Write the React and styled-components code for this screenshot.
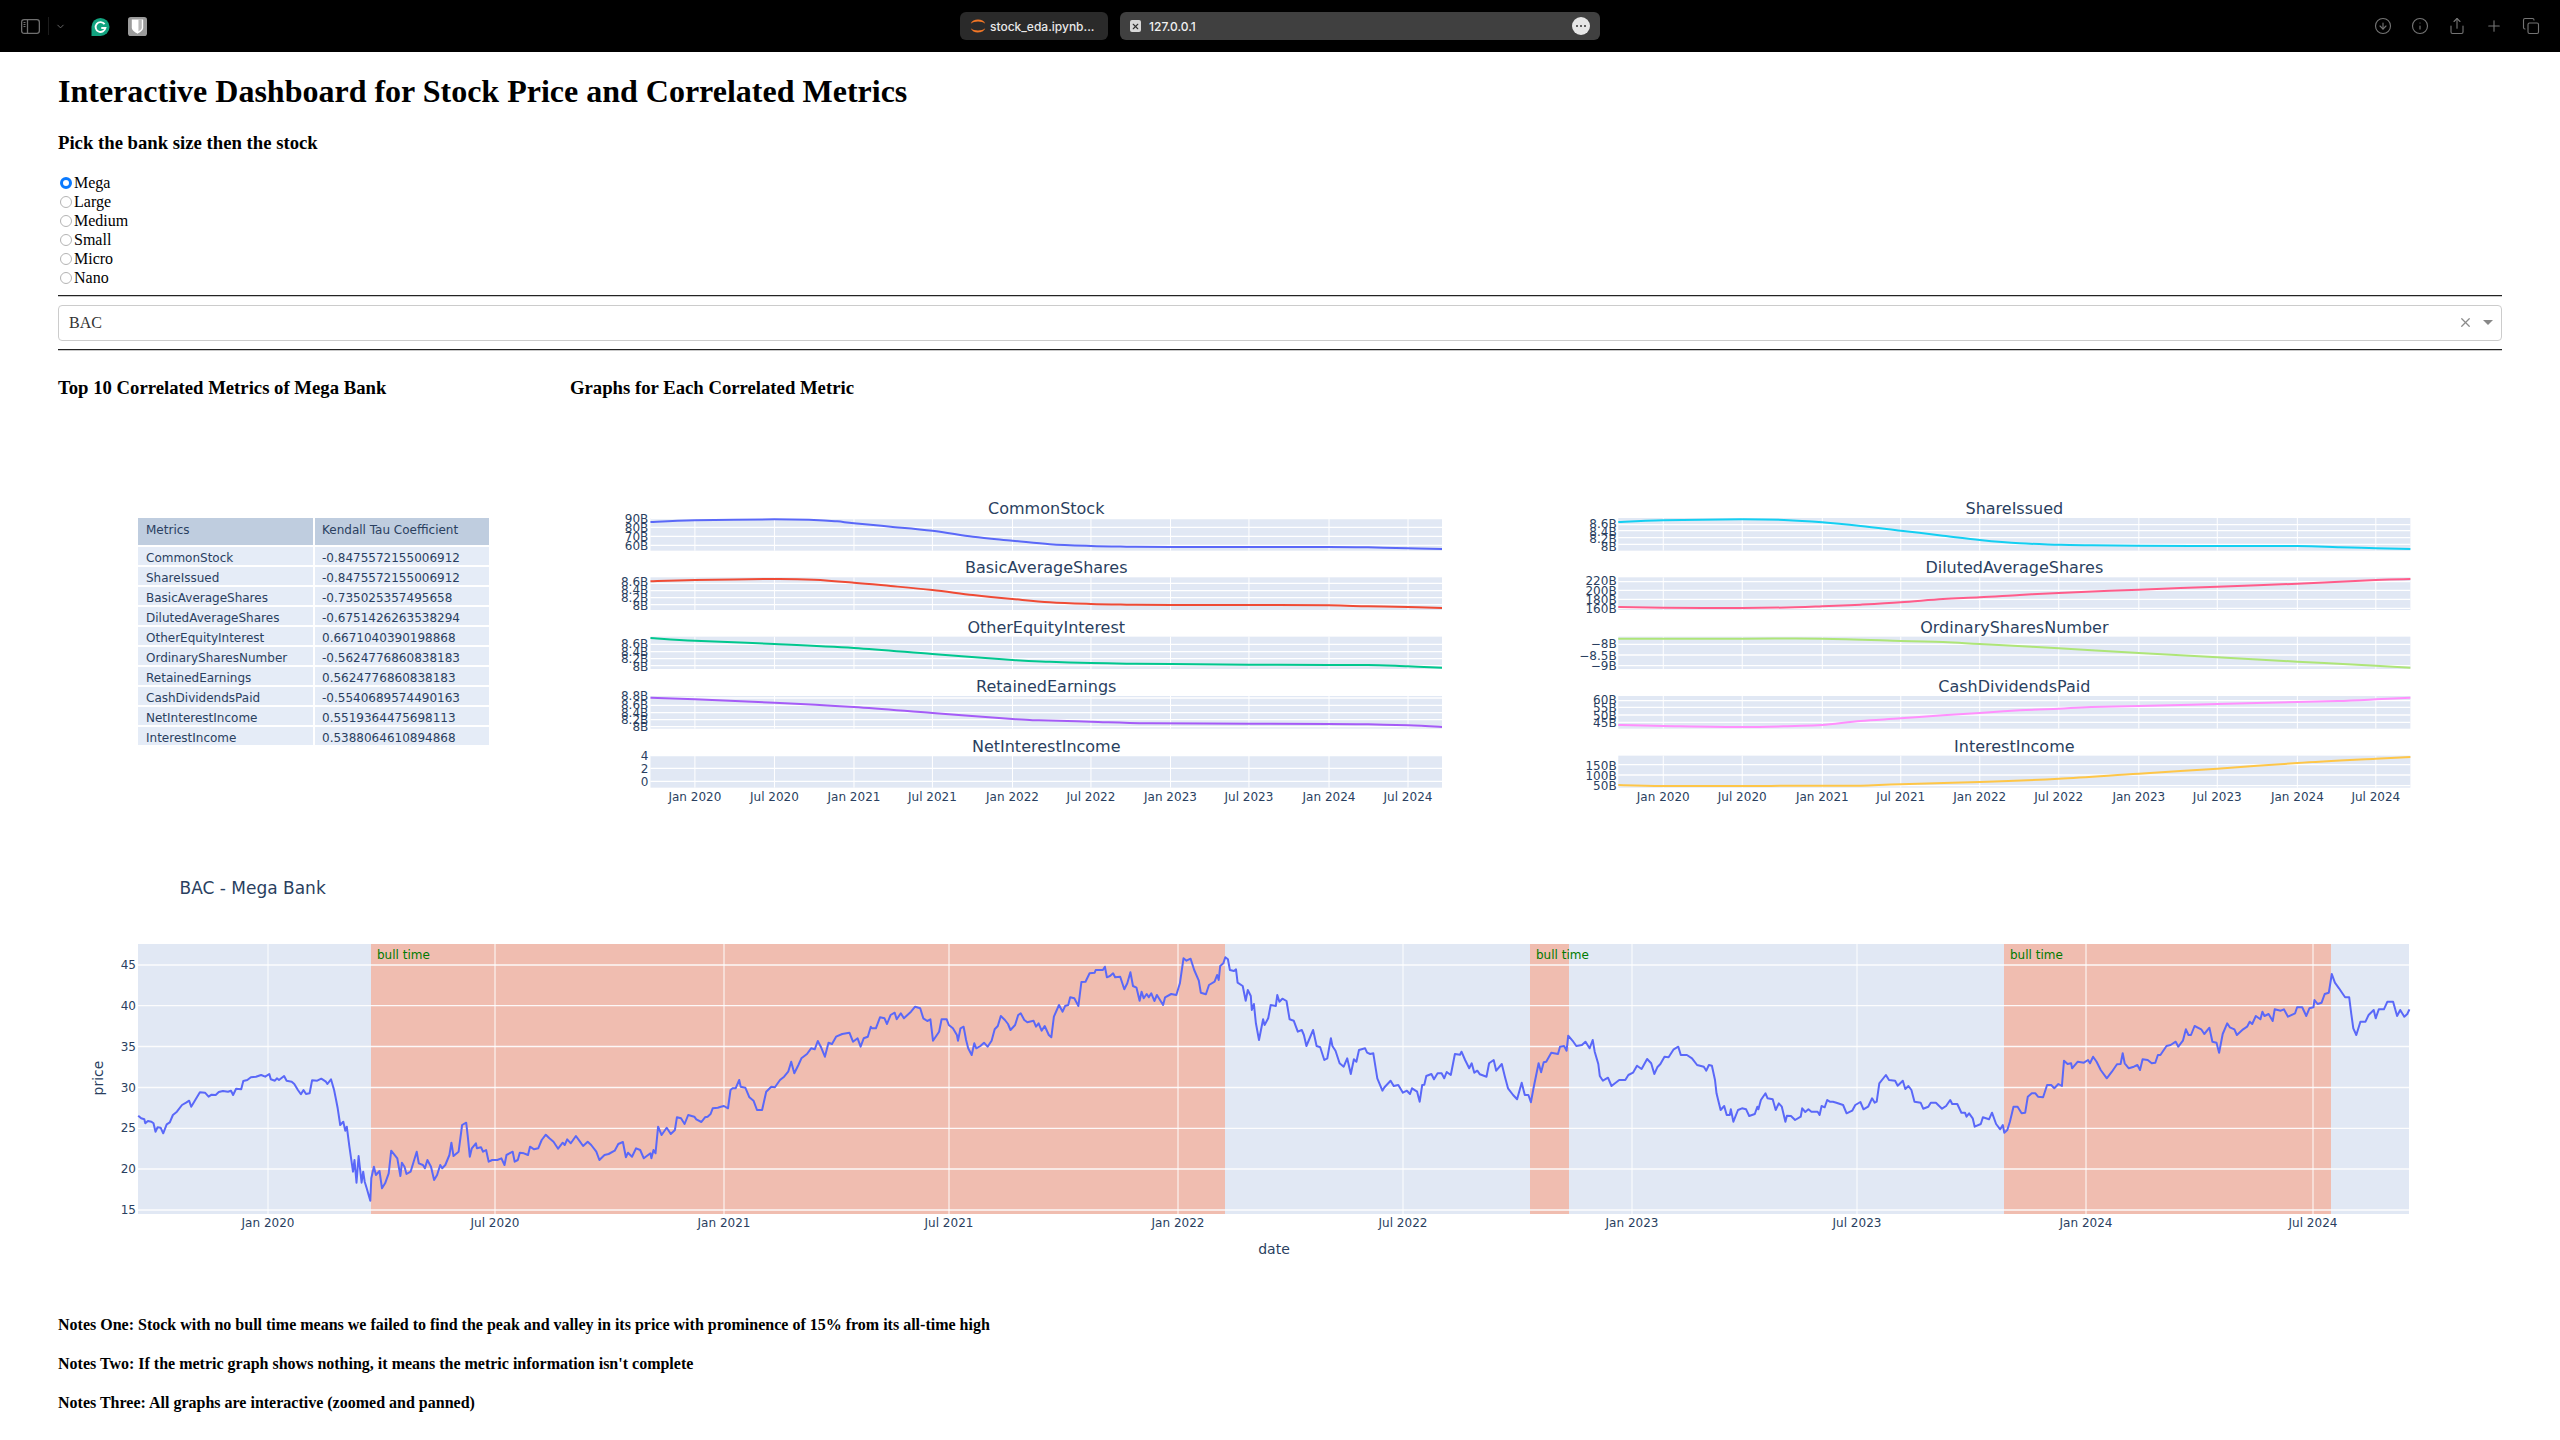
import React from "react";
import styled, { createGlobalStyle } from "styled-components";
import { ChevronDown, CircleArrowDown, Info, Share, Plus, Copy, X } from "lucide-react";

const Global = createGlobalStyle`
  html, body { margin: 0; padding: 0; background: #fff; }
  body { font-family: "Liberation Serif", "Times New Roman", serif; color: #000; overflow: hidden; }
`;

const TopBar = styled.header`
  height: 52px; background: #000; display: flex; align-items: center; box-sizing: border-box;
`;
const LeftTools = styled.div`
  width: 960px; flex: none; display: flex; align-items: center; padding-left: 21px; box-sizing: border-box; color: #6f6f6f;
`;
const ToolDivider = styled.span`
  width: 1px; height: 18px; background: #1c1c1c; margin: 0 6px 0 8px;
`;
const ExtensionIcon = styled.svg`
  width: 19px; height: 19px; flex: none; margin-left: ${p => p.$gap}px;
`;
const TabChip = styled.div`
  width: 148px; height: 28px; flex: none; border-radius: 6px; background: #2a2a2a; color: #e8e8e8;
  display: flex; align-items: center; gap: 3px; padding-left: 9px; box-sizing: border-box;
  font: 500 12px "Inter", "Liberation Sans", sans-serif; white-space: nowrap;
`;
const UrlBar = styled.div`
  width: 480px; height: 28px; flex: none; margin-left: 12px; border-radius: 6px; background: #404040; color: #f0f0f0;
  display: flex; align-items: center; gap: 8px; padding: 0 10px 0 10px; box-sizing: border-box;
  font: 500 12px "Inter", "Liberation Sans", sans-serif;
`;
const UrlText = styled.span` flex: 1; `;
const FavX = styled.span`
  width: 11px; height: 12px; border-radius: 2px; background: #d8d8d8; color: #333; display: flex; align-items: center; justify-content: center;
`;
const MoreDots = styled.span`
  width: 18px; height: 18px; border-radius: 50%; background: #e6e6e6; display: flex; align-items: center; justify-content: center; gap: 1.5px;
`;
const Dot = styled.i` width: 2.5px; height: 2.5px; border-radius: 50%; background: #333; `;
const RightTools = styled.div`
  margin-left: auto; padding-right: 20px; display: flex; align-items: center; gap: 19px; color: #747474;
`;

const Page = styled.main` padding: 0 58px; `;
const Title = styled.h1` font-size: 32px; line-height: 37px; font-weight: 700; margin: 21px 0 22px; `;
const Heading = styled.h3` font-size: 18.72px; line-height: 21px; font-weight: 700; margin: ${p => p.$m || "0"}; `;
const RadioGroup = styled.div` margin-top: 19.5px; `;
const RadioRow = styled.label` display: flex; align-items: center; height: 19px; font-size: 16px; line-height: 19px; `;
const Radio = styled.input`
  appearance: none; box-sizing: border-box; margin: 1px 2px 0 2px; width: 12px; height: 12px; border-radius: 50%;
  border: 1px solid #b4b4b4; background: #fff;
  &:checked { border: 3.5px solid #0a7aff; }
`;
const Rule = styled.hr` margin: 8px 0; border: 0; border-top: 1px solid #222; border-bottom: 1px solid #c9c9c9; height: 0; `;
const Select = styled.div`
  height: 36px; box-sizing: border-box; border: 1px solid #ccc; border-radius: 4px; display: flex; align-items: center;
  padding: 0 8px 0 10px; font-size: 16px; color: #333;
`;
const SelectValue = styled.span` flex: 1; `;
const Clear = styled.span` color: #8a8a8a; display: flex; margin-right: 10px; `;
const Caret = styled.span` width: 0; height: 0; border: 5px solid transparent; border-top-color: #888; border-bottom: 0; `;

const Columns = styled.section` display: grid; grid-template-columns: 512px 1fr; margin-top: 26.5px; `;
const TableWrap = styled.div` margin: 119.5px 0 0 80px; width: 351px; `;
const TRow = styled.div`
  display: grid; grid-template-columns: 175px 174px; column-gap: 2px;
  height: ${p => p.$head ? 27 : 18}px; margin-bottom: 2px; overflow: visible;
  &:last-child { margin-bottom: 0; }
`;
const TCell = styled.div`
  background: ${p => p.$head ? "#BFCDDF" : "#E5ECF7"}; color: #2a3f5f; padding-left: 8px;
  font: 12px/${p => p.$head ? 25 : 23}px "DejaVu Sans", Verdana, sans-serif; white-space: nowrap; overflow: hidden;
  &:nth-child(2) { padding-left: 7px; }
`;
const ChartRow = styled.div` display: flex; margin-top: 19.5px; `;
const ChartSvg = styled.svg` display: block; width: ${p => p.$w}px; height: ${p => p.$h}px; flex: none; `;
const Label = styled.text`
  font-family: "DejaVu Sans", Verdana, sans-serif; font-size: ${p => p.$s || 12}px; fill: ${p => p.$c || "#2a3f5f"};
  text-anchor: ${p => p.$a || "middle"}; dominant-baseline: central;
`;
const Notes = styled.div` margin-top: 22px; `;
const Note = styled.h4` font-size: 16px; line-height: 18px; font-weight: 700; margin: 0 0 21px; `;

const PANEL = "#E1E8F4", SHAPE = "#F0BDB0";
const XT = ["Jan 2020","Jul 2020","Jan 2021","Jul 2021","Jan 2022","Jul 2022","Jan 2023","Jul 2023","Jan 2024","Jul 2024"];

const smooth = pts => {
  let d = `M${pts[0][0]} ${pts[0][1]}`;
  for (let i = 0; i < pts.length - 1; i++) {
    const p0 = pts[i-1] || pts[i], p1 = pts[i], p2 = pts[i+1], p3 = pts[i+2] || p2;
    const c1 = [p1[0] + (p2[0]-p0[0])/6, p1[1] + (p2[1]-p0[1])/6];
    const c2 = [p2[0] - (p3[0]-p1[0])/6, p2[1] - (p3[1]-p1[1])/6];
    d += `C${c1[0].toFixed(1)} ${c1[1].toFixed(1)} ${c2[0].toFixed(1)} ${c2[1].toFixed(1)} ${p2[0].toFixed(1)} ${p2[1].toFixed(1)}`;
  }
  return d;
};
const pairs = a => { const o = []; for (let i = 0; i < a.length; i += 2) o.push([a[i], a[i+1]]); return o; };

const leftCharts = {
  base: 600, origin: 570, plotL: 92, plotR: 1535, axisX: 88,
  vgrid: [173,318,463,606,752,895,1040,1183,1329,1473],
  panels: [
    { t: "CommonStock", top: 84, bot: 182, titleY: 55, color: "#5A68F8", grid: [86,112,139,166],
      ticks: [["90B",86],["80B",113],["70B",140],["60B",168]],
      line: [92,96,173,91,318,88,390,90,432,94,463,100,530,110,606,122,680,140,752,152,820,163,895,168,960,170,1040,171,1183,171,1329,171,1400,172,1473,175,1535,177] },
    { t: "BasicAverageShares", top: 262, bot: 360, titleY: 233, color: "#EF4B35", grid: [280,302,323,344],
      ticks: [["8.6B",275],["8.4B",300],["8.2B",325],["8B",347]],
      line: [92,274,173,270,318,267,390,269,463,278,530,288,606,300,680,315,752,327,820,337,895,342,960,344,1040,345,1183,345,1329,346,1400,349,1473,351,1535,354] },
    { t: "OtherEquityInterest", top: 440, bot: 537, titleY: 412, color: "#00C78E", grid: [463,485,506,527],
      ticks: [["8.6B",463],["8.4B",485],["8.2B",507],["8B",530]],
      line: [92,444,173,452,318,462,463,474,606,492,752,510,820,515,895,519,960,521,1040,522,1183,524,1329,525,1400,525,1473,529,1535,533] },
    { t: "RetainedEarnings", top: 618, bot: 716, titleY: 590, color: "#A55CF7", grid: [624,646,668,689,710],
      ticks: [["8.8B",618],["8.6B",645],["8.4B",668],["8.2B",690],["8B",712]],
      line: [92,623,173,628,318,638,463,651,606,669,752,687,800,691,895,695,1000,700,1183,701,1329,702,1400,703,1473,706,1535,711] },
    { t: "NetInterestIncome", top: 797, bot: 893, titleY: 770, color: "#19D3F3", grid: [797,835,874],
      ticks: [["4",797],["2",836],["0",876]], line: null },
  ],
};
const rightCharts = {
  base: 1570, origin: 1536, plotL: 88, plotR: 1532, axisX: 85,
  vgrid: [170,314,460,603,747,891,1037,1180,1326,1469],
  panels: [
    { t: "ShareIssued", top: 84, bot: 182, titleY: 55, color: "#14CFF2", grid: [104,122,143,163],
      ticks: [["8.6B",102],["8.4B",125],["8.2B",148],["8B",170]],
      line: [88,96,170,91,314,88,390,90,460,97,530,108,603,122,680,137,747,150,820,160,891,164,950,166,1037,167,1180,168,1326,168,1400,172,1469,175,1532,177] },
    { t: "DilutedAverageShares", top: 262, bot: 360, titleY: 233, color: "#FF5C8A", grid: [275,301,328,355],
      ticks: [["220B",274],["200B",302],["180B",330],["160B",358]],
      line: [88,351,170,353,314,354,410,352,460,349,530,344,603,337,680,327,747,322,820,315,891,309,1037,299,1180,290,1326,281,1469,270,1532,267] },
    { t: "OrdinarySharesNumber", top: 440, bot: 537, titleY: 412, color: "#AEE578", grid: [463,495,527],
      ticks: [["−8B",463],["−8.5B",497],["−9B",527]],
      line: [88,446,314,446,460,446,603,453,680,456,747,462,891,475,1037,489,1180,502,1326,515,1469,527,1532,533] },
    { t: "CashDividendsPaid", top: 618, bot: 716, titleY: 590, color: "#FF90FD", grid: [632,652,675,697],
      ticks: [["60B",630],["55B",655],["50B",677],["45B",700]],
      line: [88,705,170,708,314,711,410,708,460,705,530,693,603,685,680,676,747,669,820,661,891,656,950,651,1037,648,1180,642,1326,636,1400,633,1469,628,1532,623] },
    { t: "InterestIncome", top: 797, bot: 893, titleY: 770, color: "#FEC648", grid: [824,855,887],
      ticks: [["150B",827],["100B",857],["50B",887]],
      line: [88,885,170,888,314,888,460,887,530,887,603,883,747,876,891,866,1037,851,1180,836,1326,819,1469,806,1532,801] },
  ],
};

const FIG_TOP = 418, FIG_H = 426, FIG_W = 966;
function SmallMultiples({ cfg }) {
  const X = d => cfg.base + d / 1.823;
  const Y = d => 490 + d / 3;
  const L = X(cfg.plotL), R = X(cfg.plotR);
  return (
    <ChartSvg $w={FIG_W} $h={FIG_H} viewBox={`${cfg.origin} ${FIG_TOP} ${FIG_W} ${FIG_H}`}>
      {cfg.panels.map(p => (
        <g key={p.t}>
          <rect x={L} y={Y(p.top)} width={R - L} height={(p.bot - p.top) / 3} fill={PANEL} />
          {cfg.vgrid.map(v => <line key={v} x1={X(v)} x2={X(v)} y1={Y(p.top)} y2={Y(p.bot)} stroke="#fff" strokeWidth="1" />)}
          {p.grid.map(g => <line key={g} x1={L} x2={R} y1={Y(g)} y2={Y(g)} stroke="#fff" strokeWidth="1.3" />)}
          {p.line && <path d={smooth(pairs(p.line).map(([a, b]) => [X(a), Y(b)]))} fill="none" stroke={p.color} strokeWidth="2" />}
          {p.ticks.map(([t, y]) => <Label key={t} x={X(cfg.axisX)} y={Y(y)} $a="end">{t}</Label>)}
          <Label x={(L + R) / 2} y={Y(p.titleY)} $s={16}>{p.t}</Label>
        </g>
      ))}
      {cfg.vgrid.map((v, i) => <Label key={v} x={X(v)} y={Y(920)}>{XT[i]}</Label>)}
    </ChartSvg>
  );
}

const z7 = [114,767,120,775,126,778,128,790,133,783,140,785,144,790,148,815,152,802,158,803,163,820,170,793,176,787,182,765,190,755,200,735,208,728,214,722,218,740,225,722,235,697,245,698,252,710,258,704,266,705,272,696,280,693,290,695,296,692,300,705,306,686,316,688,320,663,328,660,335,652,345,650,355,645,363,650,371,642,374,658,382,662,386,655,390,660,400,648,405,662,415,665,420,672,427,690,433,703,438,690,443,702,450,700,455,661,465,662,473,656,482,665,485,672,492,658,498,690,502,720,505,745,510,795,516,785,520,812,523,800,528,860,535,935,538,900,542,968,546,888,552,968,555,935,558,965,562,985,569,1022,571,955,576,920,580,945,587,933,592,985,598,970,605,940,610,872,622,895,628,948,631,908,636,920,640,942,648,935,660,875,664,910,672,915,676,925,681,900,688,920,694,960,700,945,706,915,710,925,716,915,724,885,728,848,732,888,742,875,749,795,757,788,760,830,764,890,768,865,776,850,778,865,786,862,790,875,796,870,801,905,808,900,818,900,826,895,832,915,836,885,848,875,852,905,858,900,862,878,870,880,878,885,882,860,890,868,898,865,905,840,913,824,920,835,928,845,937,866,946,848,950,855,955,838,962,850,972,828,980,845,986,858,995,845,1002,855,1012,875,1018,900,1028,885,1036,882,1048,872,1055,852,1064,846,1070,892,1074,878,1082,890,1090,865,1098,870,1105,895,1118,880,1120,895,1124,870,1128,880,1133,800,1140,825,1150,803,1158,822,1166,810,1170,772,1178,775,1185,792,1192,765,1204,770,1208,778,1218,786,1225,772,1230,770,1236,762,1240,745,1250,743,1256,740,1262,738,1270,745,1275,690,1279,685,1285,685,1292,660,1295,680,1304,683,1312,712,1320,722,1327,750,1337,750,1345,695,1355,680,1362,682,1372,660,1380,650,1388,635,1394,605,1400,640,1408,615,1414,595,1425,582,1433,565,1440,568,1446,543,1452,560,1460,590,1467,548,1474,552,1482,530,1494,522,1508,518,1515,545,1524,535,1530,560,1536,535,1544,530,1550,500,1552,505,1560,505,1568,472];
const z8 = [48,295,53,312,60,285,68,278,72,298,80,280,86,295,100,275,108,260,118,265,124,295,132,303,138,298,143,362,155,335,160,298,170,298,174,315,182,325,190,345,192,362,197,325,203,320,208,360,212,385,219,405,224,370,228,385,236,378,243,368,250,380,258,362,264,328,270,318,276,288,284,300,290,312,295,330,304,315,310,285,315,280,322,300,328,307,340,302,345,320,350,310,356,332,362,318,370,345,375,352,380,290,390,255,397,275,402,258,408,255,412,232,420,235,428,258,434,186,442,185,450,160,460,158,462,150,476,150,480,140,484,172,490,168,496,160,500,172,510,170,518,208,524,190,530,157,535,198,542,203,548,242,552,215,556,235,562,222,566,232,571,220,577,243,582,225,594,255,598,232,610,222,620,225,627,190,634,115,640,122,648,116,655,150,664,182,668,218,678,223,684,195,695,185,700,165,703,180,706,138,712,130,716,112,721,118,725,150,733,153,737,148,740,188,750,198,756,242,760,210,766,228,768,270,772,252,776,310,782,360,790,298,793,315,800,295,805,255,815,258,818,225,822,245,828,236,836,243,842,298,850,302,858,335,866,330,870,345,875,378,888,330,895,378,902,382,910,420,916,415,923,355,926,378,932,392,940,430,948,440,955,415,962,462,968,418,973,425,978,390,990,385,994,398,1000,402,1006,400,1014,475,1024,512,1028,502,1040,482,1046,498,1055,495,1064,518,1072,512,1078,522,1082,505,1092,515,1097,545,1102,495,1106,494,1110,468,1120,462,1125,478,1132,460,1140,460,1145,475,1150,456,1158,465,1166,402,1176,404,1179,395,1186,420,1194,445,1199,430,1204,458,1210,452,1215,463,1228,470,1233,430,1242,420,1247,452,1258,432,1264,470,1270,505,1280,525,1288,538,1297,488,1303,525,1310,525,1315,547,1320,505,1330,430,1335,457,1340,427,1345,425,1355,398,1368,402,1372,380,1380,378,1385,392,1388,347,1398,365,1404,378,1415,375,1422,365,1430,385,1436,360,1440,395,1447,432,1450,468,1456,482,1466,473,1473,498,1488,480,1500,480,1506,465,1515,458,1523,437,1532,447];
const z9 = [14,417,22,430,28,462,34,442,40,432,48,410,56,412,66,388,75,380,80,405,92,405,102,415,112,435,125,440,130,452,135,435,141,437,147,480,150,520,158,570,165,558,170,585,176,585,178,568,183,605,192,570,200,565,208,568,214,588,225,582,230,560,232,568,237,540,246,520,250,535,260,538,266,570,272,550,278,560,285,605,288,587,296,588,304,600,315,590,318,565,324,576,330,568,336,575,348,575,352,585,356,558,362,562,367,540,372,545,378,545,385,548,398,555,405,580,416,572,422,555,432,546,438,568,447,560,455,535,460,548,464,545,469,490,482,465,488,480,500,482,505,497,515,482,520,507,526,498,532,510,538,545,550,548,555,566,565,560,570,548,580,548,592,566,600,558,608,540,612,552,622,552,630,578,637,578,640,590,645,580,652,595,656,620,668,612,672,592,684,598,690,578,698,612,706,628,711,615,714,638,720,630,725,605,732,560,740,560,748,580,755,578,760,530,768,520,775,520,780,530,790,532,798,495,806,495,812,505,820,492,827,498,831,422,838,432,845,430,847,445,858,425,870,428,878,420,882,430,888,410,895,425,903,450,915,475,925,455,935,433,942,432,946,400,950,430,958,445,968,440,975,435,980,450,985,418,995,420,1003,430,1010,428,1015,405,1020,405,1032,378,1040,375,1050,365,1055,380,1064,362,1070,328,1075,345,1080,345,1087,318,1100,328,1106,342,1116,323,1122,365,1130,368,1135,398,1142,342,1151,310,1156,322,1165,328,1170,345,1182,328,1190,320,1195,305,1200,312,1207,288,1216,298,1220,275,1224,288,1232,282,1240,303,1244,268,1256,272,1262,268,1270,290,1284,280,1288,262,1298,262,1306,288,1312,265,1320,262,1322,240,1328,252,1336,248,1342,222,1350,218,1356,162,1362,188,1370,205,1376,218,1382,232,1390,232,1394,280,1398,325,1404,345,1412,305,1422,305,1428,285,1438,270,1442,295,1448,268,1458,268,1465,245,1476,245,1484,288,1490,270,1498,290,1504,282,1508,268];
const conv = (arr, ox, oy) => pairs(arr).map(([a, b]) => `${(ox + a / 1.96).toFixed(1)},${(oy + b / 3).toFixed(1)}`);
const pricePts = [...conv(z7, 80, 860), ...conv(z8, 860, 920), ...conv(z9, 1640, 920)].join(" ");

const M_TOP = 844, M_H = 450, M_W = 2444;
const mGridX = [268,495,724,949,1178,1403,1632,1857,2086,2313];
const mGridY = [[45,965],[40,1005.7],[35,1046.5],[30,1087.5],[25,1128.3],[20,1169],[15,1210]];
const bull = [[371,1225],[1530,1569],[2004,2331]];

function PriceChart() {
  return (
    <ChartSvg $w={M_W} $h={M_H} viewBox={`58 ${M_TOP} ${M_W} ${M_H}`}>
      <Label x={179.5} y={888} $s={17} $a="start">BAC - Mega Bank</Label>
      <rect x={138} y={944} width={2271} height={270} fill={PANEL} />
      {bull.map(([a, b]) => <rect key={a} x={a} y={944} width={b - a} height={270} fill={SHAPE} />)}
      {mGridX.map(x => <line key={x} x1={x} x2={x} y1={944} y2={1214} stroke="#fff" strokeWidth="1.1" opacity=".9" />)}
      {mGridY.map(([v, y]) => <line key={v} x1={138} x2={2409} y1={y} y2={y} stroke="#fff" strokeWidth="1.3" opacity=".9" />)}
      <polyline points={pricePts} fill="none" stroke="#5A68F8" strokeWidth="2" strokeLinejoin="round" />
      {bull.map(([a]) => <Label key={a} x={a + 6} y={955} $a="start" $c="#007A00">bull time</Label>)}
      {mGridY.map(([v, y]) => <Label key={v} x={136} y={y} $a="end">{v}</Label>)}
      {mGridX.map((x, i) => <Label key={x} x={x} y={1223}>{XT[i]}</Label>)}
      <Label x={1274} y={1249} $s={14}>date</Label>
      <Label x={98} y={1078} $s={14} transform="rotate(-90 98 1078)">price</Label>
    </ChartSvg>
  );
}

const rows = [
  ["CommonStock","-0.8475572155006912"],["ShareIssued","-0.8475572155006912"],["BasicAverageShares","-0.735025357495658"],
  ["DilutedAverageShares","-0.6751426263538294"],["OtherEquityInterest","0.6671040390198868"],["OrdinarySharesNumber","-0.5624776860838183"],
  ["RetainedEarnings","0.5624776860838183"],["CashDividendsPaid","-0.5540689574490163"],["NetInterestIncome","0.5519364475698113"],["InterestIncome","0.5388064610894868"],
];
const sizes = ["Mega","Large","Medium","Small","Micro","Nano"];

export default function App() {
  return (
    <>
      <Global />
      <TopBar>
        <LeftTools>
          <svg width="19" height="15" viewBox="0 0 19 15" fill="none" stroke="currentColor" strokeWidth="1.3">
            <rect x=".65" y=".65" width="17.700" height="13.700" rx="2.500" />
            <path d="M6.500 .65v13.700" />
            <path d="M2.500 3.500h2M2.500 5.500h2M2.500 7.500h2" strokeWidth="1" />
          </svg>
          <ToolDivider />
          <ChevronDown size={11} strokeWidth={2} />
          <ExtensionIcon $gap={25} viewBox="0 0 20 20">
            <path d="M10 1a9.500 9.500 0 1 1 0 19H.5v-9.500A9.500 9.500 0 0 1 10 1z" fill="#12A37F" />
            <path d="M14.300 7.500A5.200 5.200 0 1 0 15.200 11.500H10.800" fill="none" stroke="#fff" strokeWidth="2" />
          </ExtensionIcon>
          <ExtensionIcon $gap={18} viewBox="0 0 20 20">
            <rect width="20" height="20" rx="3" fill="#9b9b9b" />
            <path d="M4 2.500h12v8.500c0 3-3 5-6 6.500C7 16 4 14 4 11z" fill="#fff" />
            <path d="M11 2.500h3.500v8.500c0 1.700-1.700 3-3.500 4.200z" fill="#b9b9b9" />
          </ExtensionIcon>
        </LeftTools>
        <TabChip>
          <svg width="18" height="20" viewBox="0 0 16 18">
            <path d="M1.500 7C3 2 13 2 14.500 7C11.500 4.300 4.500 4.300 1.500 7z" fill="#F37726" />
            <path d="M1.500 11C3 16 13 16 14.500 11C11.500 13.700 4.500 13.700 1.500 11z" fill="#F37726" />
          </svg>
          stock_eda.ipynb...
        </TabChip>
        <UrlBar>
          <FavX><X size={9} strokeWidth={3} /></FavX>
          <UrlText>127.0.0.1</UrlText>
          <MoreDots><Dot /><Dot /><Dot /></MoreDots>
        </UrlBar>
        <RightTools>
          <CircleArrowDown size={18} strokeWidth={1.5} />
          <Info size={18} strokeWidth={1.5} />
          <Share size={18} strokeWidth={1.5} />
          <Plus size={18} strokeWidth={1.5} />
          <Copy size={18} strokeWidth={1.5} />
        </RightTools>
      </TopBar>
      <Page>
        <Title>Interactive Dashboard for Stock Price and Correlated Metrics</Title>
        <Heading>Pick the bank size then the stock</Heading>
        <RadioGroup>
          {sizes.map((s, i) => (
            <RadioRow key={s}><Radio type="radio" name="size" defaultChecked={i === 0} />{s}</RadioRow>
          ))}
        </RadioGroup>
        <Rule />
        <Select>
          <SelectValue>BAC</SelectValue>
          <Clear><X size={15} strokeWidth={2} /></Clear>
          <Caret />
        </Select>
        <Rule />
        <Columns>
          <div>
            <Heading>Top 10 Correlated Metrics of Mega Bank</Heading>
            <TableWrap>
              <TRow $head><TCell $head>Metrics</TCell><TCell $head>Kendall Tau Coefficient</TCell></TRow>
              {rows.map(([a, b]) => <TRow key={a}><TCell>{a}</TCell><TCell>{b}</TCell></TRow>)}
            </TableWrap>
          </div>
          <div>
            <Heading>Graphs for Each Correlated Metric</Heading>
            <ChartRow>
              <SmallMultiples cfg={leftCharts} />
              <SmallMultiples cfg={rightCharts} />
            </ChartRow>
          </div>
        </Columns>
        <PriceChart />
        <Notes>
          <Note>Notes One: Stock with no bull time means we failed to find the peak and valley in its price with prominence of 15% from its all-time high</Note>
          <Note>Notes Two: If the metric graph shows nothing, it means the metric information isn't complete</Note>
          <Note>Notes Three: All graphs are interactive (zoomed and panned)</Note>
        </Notes>
      </Page>
    </>
  );
}
